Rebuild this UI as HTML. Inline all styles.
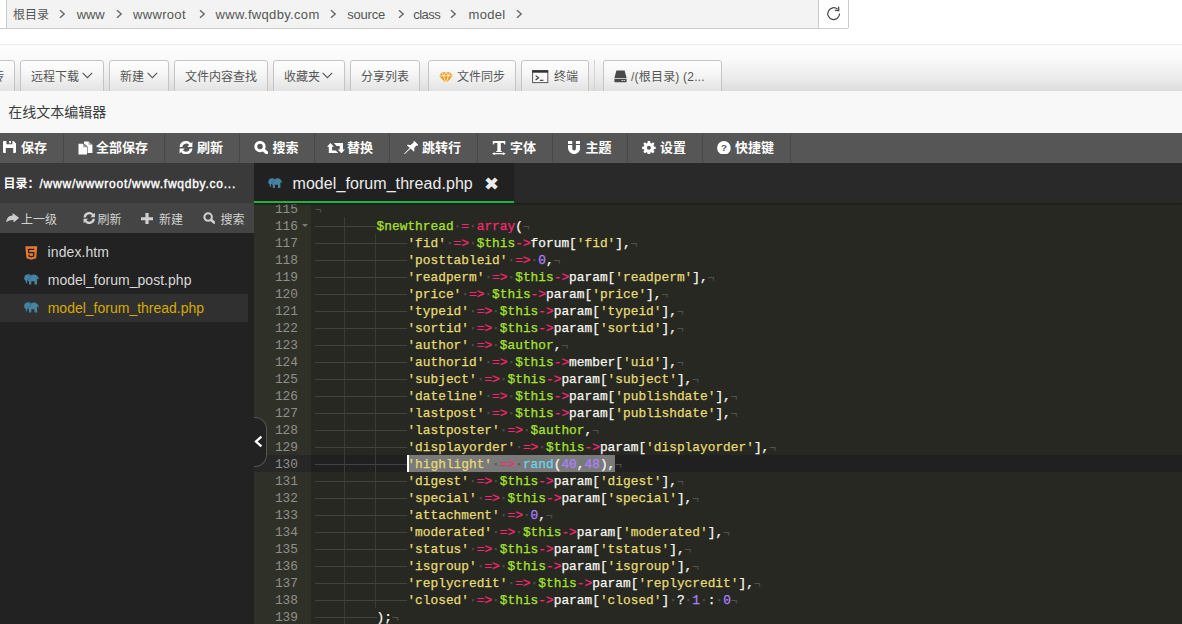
<!DOCTYPE html>
<html lang="zh-CN">
<head>
<meta charset="utf-8">
<title>在线文本编辑器</title>
<style>
*{box-sizing:border-box;margin:0;padding:0}
html,body{width:1182px;height:624px;overflow:hidden;background:#fff}
body{position:relative;font-family:"Liberation Sans","Noto Sans CJK SC",sans-serif;font-size:13px;color:#555}
.abs{position:absolute}
/* breadcrumb */
#crumbL{left:-4px;top:-3px;width:11px;height:32px;border-bottom:1px solid #ccc;background:#fff}
#crumb{left:6px;top:-3px;width:843px;height:32px;border:1px solid #ccc;background:#f3f3f3;border-radius:0 0 2px 2px}
#crumb .path{position:absolute;left:0;top:0;height:30px;line-height:33px;white-space:nowrap;color:#555;font-size:13px}
#crumb .path span{position:absolute;top:0}
#crumb .path span.cj{font-size:12px;line-height:34px}
#crumb .chev{position:absolute;top:11px}
#crumb .refresh{position:absolute;left:811px;top:0;width:30px;height:30px;background:#fff;border-left:1px solid #ccc}
/* toolbar */
#tbar{left:0;top:44px;width:1182px;height:47px;border-top:1px solid #ececec;background:linear-gradient(#fdfdfd 0,#fafafa 30%,#eaeaea 75%,#dcdcdc 100%)}
.btn{position:absolute;top:60px;height:34px;border:1px solid #c4c4c4;border-radius:3px 3px 0 0;background:linear-gradient(#fefefe,#f6f6f6 40%,#e4e4e4 90%);color:#555;font-size:12px;line-height:33px;white-space:nowrap}
.btn span{position:absolute;top:0}
/* title bar */
#title{left:0;top:91px;width:1182px;height:42px;background:#f8f8f8;color:#3c3c3c;font-size:14px;line-height:42px;padding-left:8.3px}
/* dark toolbar */
#dbar{left:0;top:133px;width:1182px;height:30px;background:#565656}
#dbar .sep{position:absolute;top:0;width:1px;height:30px;background:#484848}
#dbar b{position:absolute;top:0;font-weight:bold;color:#fff;font-size:13px;line-height:30px;white-space:nowrap}
/* sidebar */
#side{left:0;top:163px;width:254px;height:461px;background:#222}
#side .hd{position:absolute;left:0;top:0;width:254px;height:40px;background:#3a3a3a;color:#fff;font-size:12px;font-weight:bold;line-height:43px;white-space:nowrap}
#side .tl{position:absolute;left:0;top:40px;width:254px;height:30px;background:#444;color:#d2d2d2;font-size:12px;line-height:34px}
#side .tl span{position:absolute;top:0;white-space:nowrap}
#side .row{position:absolute;left:0;width:248px;height:28px;line-height:28px;color:#d8d8d8;font-size:14px;white-space:nowrap}
#side .row em{position:absolute;left:47px;top:0;font-style:normal}
#side .row.sel{background:#303030;color:#d6aa00}
/* tabs */
#tabs{left:254px;top:163px;width:928px;height:40px;background:#292929}
#tab{position:absolute;left:0;top:0;width:260px;height:40px;background:#212121;border-bottom:2px solid #22b33f;color:#ececec;font-size:16px;line-height:42px;white-space:nowrap}
/* editor */
#ed{left:254px;top:203px;width:928px;height:421px;background:#272822;overflow:hidden}
#gut{position:absolute;left:0;top:-3px;width:57px;height:440px;background:#2f3129;color:#8f908a}
.gl{height:17px;line-height:19px;text-align:right;padding-right:13px;position:relative;white-space:nowrap}
.gl.act{background:#272727}
.fold{position:absolute;right:3.4px;top:6.6px;width:0;height:0;border-left:3px solid transparent;border-right:3px solid transparent;border-top:3.2px solid #7a7b75}
#code{position:absolute;left:57px;top:-3px;width:871px;height:440px;padding-left:4px}
#gut,#code{font-family:"Liberation Mono","DejaVu Sans Mono",monospace;font-size:12.833px}
.cl{height:17px;line-height:19px;white-space:pre;position:relative;color:#f8f8f2;-webkit-text-stroke:0.25px}
.cl.act{background:#202020;margin-left:-4px;padding-left:4px}
.cl span{display:inline-block;height:17px;vertical-align:top}
.tab{width:30.8px;position:relative}
.tab u{position:absolute;left:0;top:9px;width:30.8px;height:1px;background:#43443e}
.tab.g::after{content:"";position:absolute;right:0.6px;top:0;width:1px;height:17px;background:#3b3c36}
.selbg{position:absolute;left:96.4px;top:0;width:208px;height:17px;background:#7a7a7a}
.cur{position:absolute;left:96.4px;top:0;width:2px;height:17px;background:#fff}
.cl span{position:relative}
.inv{color:#52524d}
.eol{font-size:11px;line-height:21px}
.s{color:#e6db74}.k{color:#f92672}.v{color:#a6e22e}.p{color:#f8f8f2}.n{color:#ae81ff}.f{color:#66d9ef}
#handle{left:254px;top:417px;width:13px;height:50px;background:#222;border:1px solid #555;border-left:0;border-radius:0 12px 12px 0}
</style>
</head>
<body>
<div id="crumbL" class="abs"></div>
<div id="crumb" class="abs">
  <div class="path">
    <span class="cj" style="left:6px">根目录</span>
    <span id="c1" style="left:69.7px;letter-spacing:-0.1px">www</span>
    <span id="c2" style="left:126px;letter-spacing:0.33px">wwwroot</span>
    <span id="c3" style="left:208.5px;letter-spacing:0.33px">www.fwqdby.com</span>
    <span id="c4" style="left:340.2px;letter-spacing:-0.2px">source</span>
    <span id="c5" style="left:406.2px;letter-spacing:-0.5px">class</span>
    <span id="c6" style="left:461.5px;letter-spacing:0.3px">model</span>
    <svg class="chev" style="left:52px" width="7" height="10" viewBox="0 0 7 10"><path d="M1 1.2 L5.2 5 L1 8.8" fill="none" stroke="#666" stroke-width="1.4"/></svg>
    <svg class="chev" style="left:108.5px" width="7" height="10" viewBox="0 0 7 10"><path d="M1 1.2 L5.2 5 L1 8.8" fill="none" stroke="#666" stroke-width="1.4"/></svg>
    <svg class="chev" style="left:191.5px" width="7" height="10" viewBox="0 0 7 10"><path d="M1 1.2 L5.2 5 L1 8.8" fill="none" stroke="#666" stroke-width="1.4"/></svg>
    <svg class="chev" style="left:322.5px" width="7" height="10" viewBox="0 0 7 10"><path d="M1 1.2 L5.2 5 L1 8.8" fill="none" stroke="#666" stroke-width="1.4"/></svg>
    <svg class="chev" style="left:391px" width="7" height="10" viewBox="0 0 7 10"><path d="M1 1.2 L5.2 5 L1 8.8" fill="none" stroke="#666" stroke-width="1.4"/></svg>
    <svg class="chev" style="left:443px" width="7" height="10" viewBox="0 0 7 10"><path d="M1 1.2 L5.2 5 L1 8.8" fill="none" stroke="#666" stroke-width="1.4"/></svg>
    <svg class="chev" style="left:509px" width="7" height="10" viewBox="0 0 7 10"><path d="M1 1.2 L5.2 5 L1 8.8" fill="none" stroke="#666" stroke-width="1.4"/></svg>
  </div>
  <div class="refresh"><svg width="30" height="30" viewBox="0 0 30 30" style="position:absolute;left:0;top:-0.8px"><path d="M20.6 16.6 A5.9 5.9 0 1 1 18.6 12.2" fill="none" stroke="#444" stroke-width="1.2"/><path d="M19.6 9.6 L19.8 13.6 L15.9 13.4" fill="none" stroke="#444" stroke-width="1.2"/></svg></div>
</div>
<div id="tbar" class="abs"></div>
<div class="btn abs" style="left:-30px;width:45px"><span style="left:9.3px">上传</span></div>
<div class="btn abs" style="left:20px;width:84px"><span style="left:10px">远程下载</span><svg style="position:absolute;left:61.2px;top:11.3px" width="11" height="7" viewBox="0 0 11 7"><path d="M0.6 0.9 L5.4 5.7 L10.2 0.9" fill="none" stroke="#555" stroke-width="1.1"/></svg></div>
<div class="btn abs" style="left:109px;width:60px"><span style="left:10px">新建</span><svg style="position:absolute;left:36.6px;top:11.3px" width="11" height="7" viewBox="0 0 11 7"><path d="M0.6 0.9 L5.4 5.7 L10.2 0.9" fill="none" stroke="#555" stroke-width="1.1"/></svg></div>
<div class="btn abs" style="left:174px;width:94px"><span style="left:10px">文件内容查找</span></div>
<div class="btn abs" style="left:273px;width:72px"><span style="left:10px">收藏夹</span><svg style="position:absolute;left:48px;top:11.3px" width="11" height="7" viewBox="0 0 11 7"><path d="M0.6 0.9 L5.4 5.7 L10.2 0.9" fill="none" stroke="#555" stroke-width="1.1"/></svg></div>
<div class="btn abs" style="left:350px;width:70px"><span style="left:10px">分享列表</span></div>
<div class="btn abs" style="left:428px;width:88px"><svg style="position:absolute;left:10px;top:11px" width="14" height="12" viewBox="0 0 14 12"><path d="M3 0.3 H11 L13.8 3.8 L7 11.6 L0.2 3.8 Z" fill="#f39a12"/><path d="M0.2 3.8 H13.8 M4.6 3.8 L7 11.6 L9.4 3.8 M3 0.3 L4.6 3.8 L7 0.3 L9.4 3.8 L11 0.3" fill="none" stroke="#fff" stroke-width="0.8"/></svg><span style="left:28px">文件同步</span></div>
<div class="btn abs" style="left:521px;width:68px"><svg style="position:absolute;left:9.8px;top:8.5px" width="17" height="14" viewBox="0 0 17 14"><rect x="0.6" y="0.6" width="15.2" height="12" fill="#fbfbfb" stroke="#555" stroke-width="1"/><rect x="0.3" y="0.3" width="15.8" height="2.4" fill="#333"/><path d="M3.6 5.6 L6.6 7.8 L3.6 10" fill="none" stroke="#333" stroke-width="1.1"/><path d="M7.8 10.3 H11.4" stroke="#333" stroke-width="1.1"/></svg><span style="left:32px">终端</span></div>
<div class="abs" style="left:594px;top:60px;width:1px;height:31px;background:#d4d4d4"></div>
<div class="btn abs" style="left:603px;width:119px"><svg style="position:absolute;left:10px;top:9px" width="13" height="13" viewBox="0 0 13 13"><path d="M2.4 0.4 H10.6 L12.6 8 H0.4 Z M0.4 8.8 H12.6 V11.4 a0.8 0.8 0 0 1 -0.8 0.8 H1.2 a0.8 0.8 0 0 1 -0.8 -0.8 Z" fill="#4a4a4a"/><rect x="9.6" y="10" width="1.2" height="1" fill="#eee"/><rect x="7.6" y="10" width="1.2" height="1" fill="#eee"/></svg><span style="left:27px;letter-spacing:0.2px">/(根目录) (2...</span></div>
<div id="title" class="abs">在线文本编辑器</div>
<div id="dbar" class="abs">
  <div class="sep" style="left:63px"></div><svg style="position:absolute;left:3px;top:8px" width="13" height="12" viewBox="0 0 13 12"><path fill-rule="evenodd" fill="#fff" d="M1 0 H3.4 V3.2 H9.4 V0 H10.6 L13 2.4 V11 a1 1 0 0 1 -1 1 H10.2 V7 H2.8 V12 H1 a1 1 0 0 1 -1 -1 V1 a1 1 0 0 1 1 -1 Z M6.2 0 H8 V2.2 H6.2 Z"/></svg><b style="left:21px">保存</b>
  <div class="sep" style="left:164px"></div><svg style="position:absolute;left:77.5px;top:7.5px" width="15" height="14" viewBox="0 0 15 14"><path fill="#fff" d="M6 0.5 H10.6 L14.4 3.8 V12 H9.6 V5.6 L6 2.4 Z"/><path fill="#565656" d="M10.6 0.5 V3.8 H14.4 Z" opacity="0.55"/><path fill="#fff" d="M0.5 2.8 H5.2 L9 6.2 V13.6 H0.5 Z"/><path fill="#565656" d="M5.2 2.8 V6.2 H9 Z" opacity="0.55"/></svg><b style="left:96px">全部保存</b>
  <div class="sep" style="left:239px"></div><svg style="position:absolute;left:179px;top:7.7px" width="14" height="13.4" viewBox="0 0 14 13.4"><path fill="#fff" d="M13.4 0.8 V5.9 H8.3 L10.1 4.1 A3.9 3.9 0 0 0 3.2 6 H0.6 A6.4 6.4 0 0 1 11.9 2.3 Z M0.6 12.6 V7.5 H5.7 L3.9 9.3 A3.9 3.9 0 0 0 10.8 7.4 H13.4 A6.4 6.4 0 0 1 2.1 11.1 Z"/></svg><b style="left:197px">刷新</b>
  <div class="sep" style="left:314px"></div><svg style="position:absolute;left:253.8px;top:7.7px" width="14.5" height="13.5" viewBox="0 0 14.5 13.5"><circle cx="6" cy="5.6" r="4.2" fill="none" stroke="#fff" stroke-width="2.9"/><path d="M9.6 9 L13 12" stroke="#fff" stroke-width="3.2" stroke-linecap="round"/></svg><b style="left:272.5px">搜索</b>
  <div class="sep" style="left:389px"></div><svg style="position:absolute;left:327px;top:9.6px" width="18" height="10.4" viewBox="0 0 18 10.4"><path fill="#fff" d="M3.5 0 L6.9 3.7 H5.1 V7.5 H8.8 L11.5 10.4 H1.8 V3.7 H0 Z M14.4 10.4 L10.8 6.5 H12.7 V3 H9.5 L6.9 0 H16 V6.5 H18 Z"/></svg><b style="left:347px">替换</b>
  <div class="sep" style="left:477px"></div><svg style="position:absolute;left:403.8px;top:7.7px" width="14.5" height="13.3" viewBox="0 0 14.5 13.3"><path fill="#fff" d="M9.6 0.6 L10.4 0.1 L14.4 4 L13.6 4.8 L12.4 4.6 L10.2 7 L10.4 10.2 L9.6 10.4 L6.6 7.6 L0.6 13.2 L0.1 12.8 L5.8 6.8 L3 4.4 L3.2 3.8 L6.6 4 L9.4 1.8 Z"/></svg><b style="left:422px">跳转行</b>
  <div class="sep" style="left:552px"></div><svg style="position:absolute;left:492px;top:7.9px" width="13.8" height="14.1" viewBox="0 0 13.8 14.1"><path fill="#fff" d="M0.8 0 H13.3 V3.5 H12.4 C12.2 2.4 11.7 1.9 10.6 1.9 H8.8 V9.3 C8.8 10 9.2 10.3 10.1 10.4 V11.1 H4 V10.4 C4.9 10.3 5.4 10 5.4 9.3 V1.9 H3.5 C2.4 1.9 1.9 2.4 1.7 3.5 H0.8 Z M2.8 11.3 V12.1 H11 V11.3 L13.8 12.7 L11 14.1 V13.3 H2.8 V14.1 L0 12.7 Z"/></svg><b style="left:510px">字体</b>
  <div class="sep" style="left:627px"></div><svg style="position:absolute;left:567.8px;top:7.9px" width="12.2" height="13.1" viewBox="0 0 12.2 13.1"><path fill="#fff" d="M0 0 H4.3 V3 H0 Z M7.9 0 H12.2 V3 H7.9 Z M0 3.9 H4.3 V7.8 A1.8 1.8 0 0 0 7.9 7.8 V3.9 H12.2 V7 A6.1 6.1 0 0 1 0 7 Z"/></svg><b style="left:585.5px">主题</b>
  <div class="sep" style="left:702px"></div><svg style="position:absolute;left:642px;top:7.7px" width="13.8" height="13.5" viewBox="0 0 13 13" preserveAspectRatio="none"><path fill="#fff" fill-rule="evenodd" d="M5.4 0.1 H7.6 L7.9 1.9 L8.9 2.3 L10.3 1.2 L11.8 2.7 L10.8 4.2 L11.2 5.2 L12.9 5.5 V7.6 L11.2 7.9 L10.8 8.9 L11.8 10.3 L10.3 11.8 L8.9 10.8 L7.9 11.2 L7.6 12.9 H5.4 L5.1 11.2 L4.1 10.8 L2.7 11.8 L1.2 10.3 L2.2 8.9 L1.8 7.9 L0.1 7.6 V5.5 L1.8 5.2 L2.2 4.2 L1.2 2.7 L2.7 1.2 L4.1 2.3 L5.1 1.9 Z M6.5 4.6 A1.9 1.9 0 1 0 6.5 8.4 A1.9 1.9 0 1 0 6.5 4.6 Z"/></svg><b style="left:660px">设置</b>
  <div class="sep" style="left:790px"></div><svg style="position:absolute;left:717px;top:7.6px" width="13.8" height="13.8" viewBox="0 0 13.8 13.8"><circle cx="6.9" cy="6.9" r="6.8" fill="#fff"/><text x="6.9" y="10.5" text-anchor="middle" font-family="Liberation Sans,sans-serif" font-weight="bold" font-size="9.8" fill="#565656">?</text></svg><b style="left:735px">快捷键</b>
</div>
<div id="side" class="abs">
  <div class="hd"><span id="hdtx" style="position:absolute;left:3.5px">目录：<span style="letter-spacing:0.76px;font-weight:normal;-webkit-text-stroke:0.4px">/www/wwwroot/www.fwqdby.co...</span></span></div>
  <div class="tl">
    <svg style="position:absolute;left:5.8px;top:9.6px" width="13.2" height="9.9" viewBox="0 0 13.2 9.9"><path fill="#ccc" d="M6.6 0 L13.2 4.8 L7.4 9.7 V7 C4.4 6.8 2 7.6 0.3 9.4 C0.4 5.4 2.8 2.8 6.6 2.6 Z"/></svg><span style="left:21px">上一级</span>
    <svg style="position:absolute;left:82.5px;top:9px" width="12.5" height="12" viewBox="0 0 14 13.4"><path fill="#d0d0d0" d="M13.4 0.8 V5.9 H8.3 L10.1 4.1 A3.9 3.9 0 0 0 3.2 6 H0.6 A6.4 6.4 0 0 1 11.9 2.3 Z M0.6 12.6 V7.5 H5.7 L3.9 9.3 A3.9 3.9 0 0 0 10.8 7.4 H13.4 A6.4 6.4 0 0 1 2.1 11.1 Z"/></svg><span style="left:97.5px">刷新</span>
    <svg style="position:absolute;left:141px;top:9.5px" width="12" height="11.5" viewBox="0 0 12 11.5"><path fill="#d0d0d0" d="M4.4 0 H7.6 V4.2 H12 V7.3 H7.6 V11.5 H4.4 V7.3 H0 V4.2 H4.4 Z"/></svg><span style="left:159px">新建</span>
    <svg style="position:absolute;left:202.8px;top:9px" width="12.4" height="12" viewBox="0 0 14.5 13.5"><circle cx="6" cy="5.6" r="4.4" fill="none" stroke="#d0d0d0" stroke-width="2.4"/><path d="M9.6 9 L13 12" stroke="#d0d0d0" stroke-width="3.2" stroke-linecap="round"/></svg><span style="left:220.5px">搜索</span>
  </div>
  <div class="row" style="top:75px"><svg style="position:absolute;left:25px;top:7.5px" width="12.6" height="14.4" viewBox="0 0 13 15"><path fill="#e37933" d="M0.3 0.3 H12.7 L11.6 12.8 L6.5 14.4 L1.4 12.8 Z"/><path fill="none" stroke="#222" stroke-width="1.3" d="M9.6 3.6 H3.6 L3.9 6.8 H9.2 L8.9 10.4 L6.5 11.2 L4.1 10.4 L4 9"/></svg><em id="f1" style="letter-spacing:0.08px;left:47.6px">index.htm</em></div>
  <div class="row" style="top:103px"><svg style="position:absolute;left:23.8px;top:8.4px" width="15" height="11" viewBox="0 0 15 11"><path fill="#4682a1" d="M0.2 4.2 C0.2 1.8 1.8 0.3 4.2 0.3 C5.6 0.3 6.6 0.8 7.2 1.4 C8 0.6 9.4 0.3 10.6 0.4 C12.6 0.6 14 2 14.9 4.8 L14.2 5.4 C13.8 4.8 13.5 4.6 13.1 4.6 V10.6 H10.4 V7.3 H7.3 V10.6 H5 V7.4 C4.4 7.2 4 6.8 3.8 6.4 L3 6.6 C3.4 7.8 3.4 8.8 2.6 9.6 L1.6 9 C2.2 8.2 2 7.4 1.4 6.6 C0.6 6.2 0.2 5.4 0.2 4.2 Z"/><path d="M4.8 1 C6.6 1.4 7 3.6 5.6 4.9 C4.8 5.4 3.8 5.2 3.4 4.6" fill="none" stroke="#222" stroke-width="0.5" opacity="0.45"/></svg><em id="f2" style="letter-spacing:0.03px;left:47.7px">model_forum_post.php</em></div>
  <div class="row sel" style="top:131px"><svg style="position:absolute;left:23.8px;top:8.4px" width="15" height="11" viewBox="0 0 15 11"><path fill="#4682a1" d="M0.2 4.2 C0.2 1.8 1.8 0.3 4.2 0.3 C5.6 0.3 6.6 0.8 7.2 1.4 C8 0.6 9.4 0.3 10.6 0.4 C12.6 0.6 14 2 14.9 4.8 L14.2 5.4 C13.8 4.8 13.5 4.6 13.1 4.6 V10.6 H10.4 V7.3 H7.3 V10.6 H5 V7.4 C4.4 7.2 4 6.8 3.8 6.4 L3 6.6 C3.4 7.8 3.4 8.8 2.6 9.6 L1.6 9 C2.2 8.2 2 7.4 1.4 6.6 C0.6 6.2 0.2 5.4 0.2 4.2 Z"/><path d="M4.8 1 C6.6 1.4 7 3.6 5.6 4.9 C4.8 5.4 3.8 5.2 3.4 4.6" fill="none" stroke="#222" stroke-width="0.5" opacity="0.45"/></svg><em id="f3" style="left:47.7px">model_forum_thread.php</em></div>
</div>
<div id="tabs" class="abs">
  <div id="tab"><svg style="position:absolute;left:14.2px;top:14.8px" width="14.3" height="10.3" viewBox="0 0 15 11"><path fill="#4682a1" d="M0.2 4.2 C0.2 1.8 1.8 0.3 4.2 0.3 C5.6 0.3 6.6 0.8 7.2 1.4 C8 0.6 9.4 0.3 10.6 0.4 C12.6 0.6 14 2 14.9 4.8 L14.2 5.4 C13.8 4.8 13.5 4.6 13.1 4.6 V10.6 H10.4 V7.3 H7.3 V10.6 H5 V7.4 C4.4 7.2 4 6.8 3.8 6.4 L3 6.6 C3.4 7.8 3.4 8.8 2.6 9.6 L1.6 9 C2.2 8.2 2 7.4 1.4 6.6 C0.6 6.2 0.2 5.4 0.2 4.2 Z"/><path d="M4.8 1 C6.6 1.4 7 3.6 5.6 4.9 C4.8 5.4 3.8 5.2 3.4 4.6" fill="none" stroke="#222" stroke-width="0.5" opacity="0.45"/></svg><span id="tabtx" style="position:absolute;left:38.5px;top:0;letter-spacing:0.07px">model_forum_thread.php</span><span id="tabx" style="position:absolute;left:230px;top:0;font-size:17.5px">✖</span></div>
</div>
<div id="ed" class="abs">
  <div id="gut">
<div class="gl">115</div>
<div class="gl">116<i class="fold"></i></div>
<div class="gl">117</div>
<div class="gl">118</div>
<div class="gl">119</div>
<div class="gl">120</div>
<div class="gl">121</div>
<div class="gl">122</div>
<div class="gl">123</div>
<div class="gl">124</div>
<div class="gl">125</div>
<div class="gl">126</div>
<div class="gl">127</div>
<div class="gl">128</div>
<div class="gl">129</div>
<div class="gl act">130</div>
<div class="gl">131</div>
<div class="gl">132</div>
<div class="gl">133</div>
<div class="gl">134</div>
<div class="gl">135</div>
<div class="gl">136</div>
<div class="gl">137</div>
<div class="gl">138</div>
<div class="gl">139</div>
  </div>
  <div id="code">
<div class="cl"><span class="inv eol">¬</span></div>
<div class="cl"><span class="tab g"><u></u></span><span class="tab"><u></u></span><span class="v">$newthread</span><span class="inv">·</span><span class="k">=</span><span class="inv">·</span><span class="k">array</span><span class="p">(</span><span class="inv eol">¬</span></div>
<div class="cl"><span class="tab g"><u></u></span><span class="tab g"><u></u></span><span class="tab"><u></u></span><span class="s">'fid'</span><span class="inv">·</span><span class="k">=&gt;</span><span class="inv">·</span><span class="v">$this</span><span class="k">-&gt;</span><span class="p">forum[</span><span class="s">'fid'</span><span class="p">],</span><span class="inv eol">¬</span></div>
<div class="cl"><span class="tab g"><u></u></span><span class="tab g"><u></u></span><span class="tab"><u></u></span><span class="s">'posttableid'</span><span class="inv">·</span><span class="k">=&gt;</span><span class="inv">·</span><span class="n">0</span><span class="p">,</span><span class="inv eol">¬</span></div>
<div class="cl"><span class="tab g"><u></u></span><span class="tab g"><u></u></span><span class="tab"><u></u></span><span class="s">'readperm'</span><span class="inv">·</span><span class="k">=&gt;</span><span class="inv">·</span><span class="v">$this</span><span class="k">-&gt;</span><span class="p">param[</span><span class="s">'readperm'</span><span class="p">],</span><span class="inv eol">¬</span></div>
<div class="cl"><span class="tab g"><u></u></span><span class="tab g"><u></u></span><span class="tab"><u></u></span><span class="s">'price'</span><span class="inv">·</span><span class="k">=&gt;</span><span class="inv">·</span><span class="v">$this</span><span class="k">-&gt;</span><span class="p">param[</span><span class="s">'price'</span><span class="p">],</span><span class="inv eol">¬</span></div>
<div class="cl"><span class="tab g"><u></u></span><span class="tab g"><u></u></span><span class="tab"><u></u></span><span class="s">'typeid'</span><span class="inv">·</span><span class="k">=&gt;</span><span class="inv">·</span><span class="v">$this</span><span class="k">-&gt;</span><span class="p">param[</span><span class="s">'typeid'</span><span class="p">],</span><span class="inv eol">¬</span></div>
<div class="cl"><span class="tab g"><u></u></span><span class="tab g"><u></u></span><span class="tab"><u></u></span><span class="s">'sortid'</span><span class="inv">·</span><span class="k">=&gt;</span><span class="inv">·</span><span class="v">$this</span><span class="k">-&gt;</span><span class="p">param[</span><span class="s">'sortid'</span><span class="p">],</span><span class="inv eol">¬</span></div>
<div class="cl"><span class="tab g"><u></u></span><span class="tab g"><u></u></span><span class="tab"><u></u></span><span class="s">'author'</span><span class="inv">·</span><span class="k">=&gt;</span><span class="inv">·</span><span class="v">$author</span><span class="p">,</span><span class="inv eol">¬</span></div>
<div class="cl"><span class="tab g"><u></u></span><span class="tab g"><u></u></span><span class="tab"><u></u></span><span class="s">'authorid'</span><span class="inv">·</span><span class="k">=&gt;</span><span class="inv">·</span><span class="v">$this</span><span class="k">-&gt;</span><span class="p">member[</span><span class="s">'uid'</span><span class="p">],</span><span class="inv eol">¬</span></div>
<div class="cl"><span class="tab g"><u></u></span><span class="tab g"><u></u></span><span class="tab"><u></u></span><span class="s">'subject'</span><span class="inv">·</span><span class="k">=&gt;</span><span class="inv">·</span><span class="v">$this</span><span class="k">-&gt;</span><span class="p">param[</span><span class="s">'subject'</span><span class="p">],</span><span class="inv eol">¬</span></div>
<div class="cl"><span class="tab g"><u></u></span><span class="tab g"><u></u></span><span class="tab"><u></u></span><span class="s">'dateline'</span><span class="inv">·</span><span class="k">=&gt;</span><span class="inv">·</span><span class="v">$this</span><span class="k">-&gt;</span><span class="p">param[</span><span class="s">'publishdate'</span><span class="p">],</span><span class="inv eol">¬</span></div>
<div class="cl"><span class="tab g"><u></u></span><span class="tab g"><u></u></span><span class="tab"><u></u></span><span class="s">'lastpost'</span><span class="inv">·</span><span class="k">=&gt;</span><span class="inv">·</span><span class="v">$this</span><span class="k">-&gt;</span><span class="p">param[</span><span class="s">'publishdate'</span><span class="p">],</span><span class="inv eol">¬</span></div>
<div class="cl"><span class="tab g"><u></u></span><span class="tab g"><u></u></span><span class="tab"><u></u></span><span class="s">'lastposter'</span><span class="inv">·</span><span class="k">=&gt;</span><span class="inv">·</span><span class="v">$author</span><span class="p">,</span><span class="inv eol">¬</span></div>
<div class="cl"><span class="tab g"><u></u></span><span class="tab g"><u></u></span><span class="tab"><u></u></span><span class="s">'displayorder'</span><span class="inv">·</span><span class="k">=&gt;</span><span class="inv">·</span><span class="v">$this</span><span class="k">-&gt;</span><span class="p">param[</span><span class="s">'displayorder'</span><span class="p">],</span><span class="inv eol">¬</span></div>
<div class="cl act"><div class="selbg"></div><div class="cur"></div><span class="tab g"><u></u></span><span class="tab g"><u></u></span><span class="tab"><u></u></span><span class="s">'highlight'</span><span class="inv">·</span><span class="k">=&gt;</span><span class="inv">·</span><span class="f">rand</span><span class="p">(</span><span class="n">40</span><span class="p">,</span><span class="n">48</span><span class="p">),</span><span class="inv eol">¬</span></div>
<div class="cl"><span class="tab g"><u></u></span><span class="tab g"><u></u></span><span class="tab"><u></u></span><span class="s">'digest'</span><span class="inv">·</span><span class="k">=&gt;</span><span class="inv">·</span><span class="v">$this</span><span class="k">-&gt;</span><span class="p">param[</span><span class="s">'digest'</span><span class="p">],</span><span class="inv eol">¬</span></div>
<div class="cl"><span class="tab g"><u></u></span><span class="tab g"><u></u></span><span class="tab"><u></u></span><span class="s">'special'</span><span class="inv">·</span><span class="k">=&gt;</span><span class="inv">·</span><span class="v">$this</span><span class="k">-&gt;</span><span class="p">param[</span><span class="s">'special'</span><span class="p">],</span><span class="inv eol">¬</span></div>
<div class="cl"><span class="tab g"><u></u></span><span class="tab g"><u></u></span><span class="tab"><u></u></span><span class="s">'attachment'</span><span class="inv">·</span><span class="k">=&gt;</span><span class="inv">·</span><span class="n">0</span><span class="p">,</span><span class="inv eol">¬</span></div>
<div class="cl"><span class="tab g"><u></u></span><span class="tab g"><u></u></span><span class="tab"><u></u></span><span class="s">'moderated'</span><span class="inv">·</span><span class="k">=&gt;</span><span class="inv">·</span><span class="v">$this</span><span class="k">-&gt;</span><span class="p">param[</span><span class="s">'moderated'</span><span class="p">],</span><span class="inv eol">¬</span></div>
<div class="cl"><span class="tab g"><u></u></span><span class="tab g"><u></u></span><span class="tab"><u></u></span><span class="s">'status'</span><span class="inv">·</span><span class="k">=&gt;</span><span class="inv">·</span><span class="v">$this</span><span class="k">-&gt;</span><span class="p">param[</span><span class="s">'tstatus'</span><span class="p">],</span><span class="inv eol">¬</span></div>
<div class="cl"><span class="tab g"><u></u></span><span class="tab g"><u></u></span><span class="tab"><u></u></span><span class="s">'isgroup'</span><span class="inv">·</span><span class="k">=&gt;</span><span class="inv">·</span><span class="v">$this</span><span class="k">-&gt;</span><span class="p">param[</span><span class="s">'isgroup'</span><span class="p">],</span><span class="inv eol">¬</span></div>
<div class="cl"><span class="tab g"><u></u></span><span class="tab g"><u></u></span><span class="tab"><u></u></span><span class="s">'replycredit'</span><span class="inv">·</span><span class="k">=&gt;</span><span class="inv">·</span><span class="v">$this</span><span class="k">-&gt;</span><span class="p">param[</span><span class="s">'replycredit'</span><span class="p">],</span><span class="inv eol">¬</span></div>
<div class="cl"><span class="tab g"><u></u></span><span class="tab g"><u></u></span><span class="tab"><u></u></span><span class="s">'closed'</span><span class="inv">·</span><span class="k">=&gt;</span><span class="inv">·</span><span class="v">$this</span><span class="k">-&gt;</span><span class="p">param[</span><span class="s">'closed'</span><span class="p">]</span><span class="inv">·</span><span class="p">?</span><span class="inv">·</span><span class="n">1</span><span class="inv">·</span><span class="p">:</span><span class="inv">·</span><span class="n">0</span><span class="inv eol">¬</span></div>
<div class="cl"><span class="tab g"><u></u></span><span class="tab"><u></u></span><span class="p">);</span><span class="inv eol">¬</span></div>
  </div>
</div>
<div class="abs" style="left:254px;top:203px;width:928px;height:3px;background:linear-gradient(#1b1c17,rgba(30,31,26,0.5) 60%,rgba(39,40,34,0))"></div>
<div id="handle" class="abs"><svg style="position:absolute;left:0px;top:17px" width="9" height="13" viewBox="0 0 9 13"><path d="M7.4 1.6 L2 6.5 L7.4 11.4" fill="none" stroke="#fff" stroke-width="2.3"/></svg></div>
</body>
</html>
